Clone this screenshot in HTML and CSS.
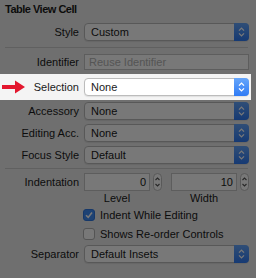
FILE: index.html
```html
<!DOCTYPE html>
<html lang="en">
<head>
  <meta charset="UTF-8">
  <title>Table View Cell - Attributes</title>
  <link rel="stylesheet" href="styles.css">
</head>
<body>

  <div class="inspector">
    <h1 class="section-title">Table View Cell</h1>

    <div class="row">
      <span class="label">Style</span>
      <div class="popup">
        <span class="value">Custom</span>
        <span class="cap"><svg width="9" height="12" viewBox="0 0 9 12"><path d="M2 4.6 L4.5 2.1 L7 4.6 M2 7.4 L4.5 9.9 L7 7.4"/></svg></span>
      </div>
    </div>

    <hr class="divider">

    <div class="row">
      <span class="label">Identifier</span>
      <div class="field"><span class="placeholder">Reuse Identifier</span></div>
    </div>

    <div class="row spotlight">
      <svg class="arrow" width="24" height="14" viewBox="0 0 24 14"><path d="M0 5 H13 V0.5 L23 7 L13 13.5 V9 H0 Z"/></svg>
      <span class="label">Selection</span>
      <div class="popup">
        <span class="value">None</span>
        <span class="cap"><svg width="9" height="12" viewBox="0 0 9 12"><path d="M2 4.6 L4.5 2.1 L7 4.6 M2 7.4 L4.5 9.9 L7 7.4"/></svg></span>
      </div>
    </div>

    <div class="row">
      <span class="label">Accessory</span>
      <div class="popup">
        <span class="value">None</span>
        <span class="cap"><svg width="9" height="12" viewBox="0 0 9 12"><path d="M2 4.6 L4.5 2.1 L7 4.6 M2 7.4 L4.5 9.9 L7 7.4"/></svg></span>
      </div>
    </div>

    <div class="row">
      <span class="label">Editing Acc.</span>
      <div class="popup">
        <span class="value">None</span>
        <span class="cap"><svg width="9" height="12" viewBox="0 0 9 12"><path d="M2 4.6 L4.5 2.1 L7 4.6 M2 7.4 L4.5 9.9 L7 7.4"/></svg></span>
      </div>
    </div>

    <div class="row">
      <span class="label">Focus Style</span>
      <div class="popup">
        <span class="value">Default</span>
        <span class="cap"><svg width="9" height="12" viewBox="0 0 9 12"><path d="M2 4.6 L4.5 2.1 L7 4.6 M2 7.4 L4.5 9.9 L7 7.4"/></svg></span>
      </div>
    </div>

    <hr class="divider tight">

    <div class="row indent">
      <span class="label">Indentation</span>
      <div class="steppers">
        <div class="number">
          <div class="field num">0</div>
          <span class="stepper"><svg width="7" height="14" viewBox="0 0 7 14"><path d="M1.5 5 L3.5 3 L5.5 5 M1.5 9 L3.5 11 L5.5 9"/></svg></span>
        </div>
        <div class="number">
          <div class="field num">10</div>
          <span class="stepper"><svg width="7" height="14" viewBox="0 0 7 14"><path d="M1.5 5 L3.5 3 L5.5 5 M1.5 9 L3.5 11 L5.5 9"/></svg></span>
        </div>
      </div>
    </div>
    <div class="sublabels">
      <span>Level</span>
      <span>Width</span>
    </div>

    <div class="check-row">
      <span class="box on"><svg width="10" height="10" viewBox="0 0 10 10"><path d="M2 5.2 L4.2 7.4 L8 2.6"/></svg></span>
      <span>Indent While Editing</span>
    </div>
    <div class="check-row">
      <span class="box"></span>
      <span>Shows Re-order Controls</span>
    </div>

    <div class="row">
      <span class="label">Separator</span>
      <div class="popup">
        <span class="value">Default Insets</span>
        <span class="cap"><svg width="9" height="12" viewBox="0 0 9 12"><path d="M2 4.6 L4.5 2.1 L7 4.6 M2 7.4 L4.5 9.9 L7 7.4"/></svg></span>
      </div>
    </div>
  </div>

</body>
</html>
```

FILE: styles.css
```css
body {
  margin: 0;
  width: 256px;
  height: 278px;
  overflow: hidden;
  background: #ececec;
  font-family: "Liberation Sans", Arial, sans-serif;
  font-size: 11px;
  color: #1a1a1a;
}

.inspector {
  padding-top: 2px;
}

.section-title {
  margin: 0 0 5px 5px;
  font-size: 11px;
  font-weight: bold;
  letter-spacing: -0.5px;
  line-height: 14px;
}

.row {
  display: grid;
  grid-template-columns: 79px 165px;
  column-gap: 5px;
  align-items: center;
  height: 22px;
}

.label {
  text-align: right;
  white-space: nowrap;
}

.divider {
  border: 0;
  border-top: 1px solid #cdcdcd;
  height: 0;
  margin: 4px 8px 3px 5px;
}

.divider.tight {
  margin-top: 2px;
}

/* highlighted row, everything else is dimmed by its shadow */
.spotlight {
  position: relative;
  z-index: 1;
  width: 251px;
  height: 26px;
  margin-top: 1px;
  background: #f4f4f4;
  box-shadow: 0 0 0 400px rgba(0, 0, 0, 0.53);
}

.arrow {
  position: absolute;
  left: 2px;
  top: 6px;
  fill: #e3172e;
}

.popup {
  display: flex;
  align-items: center;
  height: 18px;
  box-sizing: border-box;
  border: 1px solid #bcbcbc;
  border-radius: 4px;
  background: #fff;
  padding-left: 6px;
  box-shadow: 0 1px 1px rgba(0, 0, 0, 0.08);
}

.popup .value {
  flex: 1;
  line-height: 16px;
}

.cap {
  display: flex;
  align-items: center;
  justify-content: center;
  align-self: stretch;
  width: 15px;
  margin: -1px -1px -1px 0;
  border-radius: 0 4px 4px 0;
  background: linear-gradient(#66a6fb, #2f7bf5);
}

.cap svg path {
  fill: none;
  stroke: #fff;
  stroke-width: 1.3;
}

.field {
  height: 16px;
  box-sizing: border-box;
  border: 1px solid #c6c6c6;
  background: #fff;
  padding: 0 4px;
  line-height: 14px;
}

.placeholder {
  color: #b4b4b4;
}

.indent {
  grid-template-columns: 79px auto;
  height: 20px;
}

.steppers {
  display: flex;
  gap: 9px;
}

.number {
  display: flex;
  gap: 3px;
}

.field.num {
  width: 66px;
  height: 18px;
  line-height: 16px;
  text-align: right;
  padding-right: 3px;
}

.stepper {
  display: flex;
  align-items: center;
  justify-content: center;
  width: 9px;
  height: 18px;
  box-sizing: border-box;
  border: 1px solid #bdbdbd;
  border-radius: 5px;
  background: #fff;
}

.stepper svg path {
  fill: none;
  stroke: #555;
  stroke-width: 1.1;
}

.sublabels {
  display: grid;
  grid-template-columns: 66px 66px;
  column-gap: 21px;
  margin-left: 84px;
  line-height: 13px;
  text-align: center;
}

.check-row {
  display: flex;
  align-items: center;
  gap: 5px;
  height: 19px;
  padding-left: 83px;
}

.box {
  display: flex;
  align-items: center;
  justify-content: center;
  width: 12px;
  height: 12px;
  box-sizing: border-box;
  border: 1px solid #b2b2b2;
  border-radius: 3px;
  background: #fff;
}

.box.on {
  background: #3f8cf6;
  border-color: #2f78e0;
}

.box svg path {
  fill: none;
  stroke: #fff;
  stroke-width: 1.6;
}
```
